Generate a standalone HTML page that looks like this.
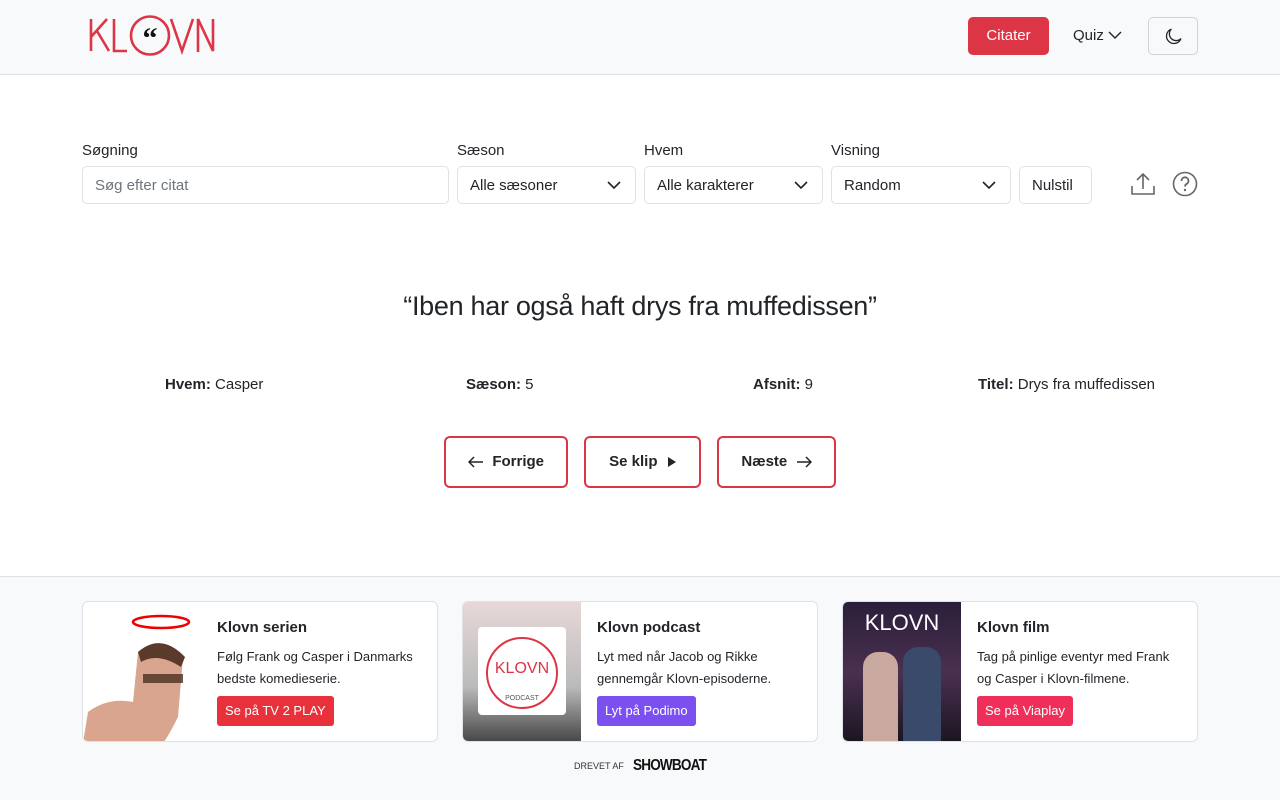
<!DOCTYPE html>
<html><head><meta charset="utf-8"><style>
*{box-sizing:border-box;margin:0;padding:0}
body{width:1280px;height:800px;background:#fff;font-family:"Liberation Sans",sans-serif;color:#212529;position:relative;overflow:hidden;font-size:15px}
.hdr{position:absolute;left:0;top:0;width:1280px;height:75px;background:#f8f9fa;border-bottom:1px solid #dee2e6}
.btnred{position:absolute;left:968px;top:17px;width:81px;height:38px;background:#dc3545;color:#fff;border-radius:5px;font-size:15px;text-align:center;line-height:38px}
.quiz{position:absolute;left:1073px;top:27px;font-size:15px}
.moon{position:absolute;left:1148px;top:17px;width:50px;height:38px;border:1px solid #ced4da;border-radius:5px;background:#f8f9fa}
label{position:absolute;top:142px;font-size:15px}
.inp{position:absolute;top:166px;height:38px;border:1px solid #dee2e6;border-radius:5px;font-size:15px;line-height:37px;padding-left:12px;background:#fff}
.inp svg{position:absolute;right:14px;top:13px}
.quote{position:absolute;left:0;width:1280px;top:291px;text-align:center;font-size:27px;letter-spacing:-0.3px}
.meta{position:absolute;top:376px;font-size:15px}
.nb{position:absolute;top:436px;height:52px;border:2px solid #dc3545;border-radius:6px;font-weight:bold;font-size:15px;line-height:48px;text-align:center}
.nb svg{vertical-align:-2px}
.foot{position:absolute;left:0;top:576px;width:1280px;height:224px;background:#f8f9fa;border-top:1px solid #dee2e6}
.card{position:absolute;top:601px;width:356px;height:141px;background:#fff;border:1px solid #dee2e6;border-radius:6px;overflow:hidden}
.card .img{position:absolute;left:0;top:0;width:118px;height:141px}
.card h4{position:absolute;left:134px;top:17px;font-size:15px}
.card p{position:absolute;left:134px;top:44px;font-size:13px;line-height:22px;width:210px}
.card .b{position:absolute;left:134px;top:94px;height:30px;padding:0 8px;color:#fff;font-size:13px;line-height:30px;border-radius:3px}
</style></head><body>
<div class="hdr">
<svg style="position:absolute;left:89px;top:15px" width="126" height="42" viewBox="0 0 126 42">
<g fill="none" stroke="#dc3545" stroke-width="2.6">
<path d="M2 4v32M2 22L18 4M8 16l12 20"/>
<path d="M25 4v32h13"/>
<circle cx="61" cy="20.5" r="19"/>
<path d="M82 4l11 32 11-32"/>
<path d="M109 37V4l15 32V4"/>
</g>
<text x="61" y="33" text-anchor="middle" font-size="30" font-weight="bold" fill="#111" font-family="Liberation Serif">“</text>
</svg>
<div class="btnred">Citater</div>
<div class="quiz">Quiz <svg width="14" height="10" viewBox="0 0 14 10"><path d="M1 2l6 6 6-6" fill="none" stroke="#212529" stroke-width="1.4"/></svg></div>
<div class="moon"><svg style="position:absolute;left:16px;top:10px" width="17" height="17" viewBox="0 0 16 16"><path d="M6 1a7 7 0 1 0 9 9A6 6 0 0 1 6 1z" fill="none" stroke="#212529" stroke-width="1.2"/></svg></div>
</div>
<label style="left:82px">Søgning</label><label style="left:457px">Sæson</label><label style="left:644px">Hvem</label><label style="left:831px">Visning</label>
<div class="inp" style="left:82px;width:367px;color:#6c757d">Søg efter citat</div>
<div class="inp" style="left:457px;width:179px">Alle sæsoner<svg width="14" height="10"><path d="M1 2l6 6 6-6" fill="none" stroke="#212529" stroke-width="1.6"/></svg></div>
<div class="inp" style="left:644px;width:179px">Alle karakterer<svg width="14" height="10"><path d="M1 2l6 6 6-6" fill="none" stroke="#212529" stroke-width="1.6"/></svg></div>
<div class="inp" style="left:831px;width:180px">Random<svg width="14" height="10"><path d="M1 2l6 6 6-6" fill="none" stroke="#212529" stroke-width="1.6"/></svg></div>
<div class="inp" style="left:1019px;width:73px">Nulstil</div>
<svg style="position:absolute;left:1130px;top:171px" width="26" height="26" viewBox="0 0 26 26"><path d="M13 3v15M7 9l6-6 6 6M2 15v8h22v-8" fill="none" stroke="#666" stroke-width="1.6"/></svg>
<svg style="position:absolute;left:1172px;top:171px" width="26" height="26" viewBox="0 0 26 26"><circle cx="13" cy="13" r="11.5" fill="none" stroke="#666" stroke-width="1.6"/><path d="M9.5 10a3.5 3.5 0 1 1 5 3c-1.2.6-1.5 1.2-1.5 2.5" fill="none" stroke="#666" stroke-width="1.8"/><circle cx="13" cy="19" r="1.2" fill="#666"/></svg>
<div class="quote">“Iben har også haft drys fra muffedissen”</div>
<div class="meta" style="left:165px"><b>Hvem:</b> Casper</div>
<div class="meta" style="left:466px"><b>Sæson:</b> 5</div>
<div class="meta" style="left:753px"><b>Afsnit:</b> 9</div>
<div class="meta" style="left:978px"><b>Titel:</b> Drys fra muffedissen</div>
<div class="nb" style="left:444px;width:124px"><svg width="16" height="12"><path d="M15 6H1M6 1L1 6l5 5" fill="none" stroke="#212529" stroke-width="1.5"/></svg>&nbsp; Forrige</div>
<div class="nb" style="left:584px;width:117px">Se klip &nbsp;<svg width="10" height="12"><path d="M2 1l8 5-8 5z" fill="#212529"/></svg></div>
<div class="nb" style="left:717px;width:119px">Næste &nbsp;<svg width="16" height="12"><path d="M1 6h14M10 1l5 5-5 5" fill="none" stroke="#212529" stroke-width="1.5"/></svg></div>
<div class="foot"></div>
<div class="card" style="left:82px"><div class="img"><svg width="118" height="141"><ellipse cx="78" cy="20" rx="28" ry="6" fill="none" stroke="#e00" stroke-width="2.5"/><path d="M0 141L5 110Q25 95 50 100L55 50Q80 35 100 55L95 115Q85 135 80 141z" fill="#d9a58e"/><path d="M55 50Q78 30 102 55L98 65Q75 50 58 60z" fill="#5a3a2a"/><rect x="60" y="72" width="40" height="9" fill="#4a3020" opacity=".8"/></svg></div><h4>Klovn serien</h4><p>Følg Frank og Casper i Danmarks bedste komedieserie.</p><div class="b" style="background:#e8313b">Se på TV 2 PLAY</div></div>
<div class="card" style="left:462px"><div class="img" style="background:linear-gradient(#e8d8d8,#bbb 60%,#444)"><div style="position:absolute;left:15px;top:25px;width:88px;height:88px;background:#fff;border-radius:4px"><div style="position:absolute;left:8px;top:10px;width:72px;height:72px;border:2px solid #dc3545;border-radius:50%;color:#dc3545;font-size:16px;text-align:center;line-height:60px">KLOVN<div style="font-size:7px;line-height:0;color:#555">PODCAST</div></div></div></div><h4>Klovn podcast</h4><p>Lyt med når Jacob og Rikke gennemgår Klovn-episoderne.</p><div class="b" style="background:#7b4ff0">Lyt på Podimo</div></div>
<div class="card" style="left:842px"><div class="img" style="background:linear-gradient(#2a1f3a,#4a3050 50%,#1a1520)"><div style="color:#fff;font-size:22px;text-align:center;padding-top:8px">KLOVN</div><div style="position:absolute;left:20px;top:50px;width:35px;height:91px;background:#c9a8a0;border-radius:15px 15px 0 0"></div><div style="position:absolute;left:60px;top:45px;width:38px;height:96px;background:#3a4a6a;border-radius:15px 15px 0 0"></div></div><h4>Klovn film</h4><p>Tag på pinlige eventyr med Frank og Casper i Klovn-filmene.</p><div class="b" style="background:#ef2f5a">Se på Viaplay</div></div>
<div style="position:absolute;left:574px;top:761px;font-size:9px;color:#333">DREVET AF</div>
<div style="position:absolute;left:633px;top:757px;font-size:16px;font-weight:bold;color:#111;letter-spacing:-1px;transform:scaleX(.85);transform-origin:left">SHOWBOAT</div>
</body></html>
